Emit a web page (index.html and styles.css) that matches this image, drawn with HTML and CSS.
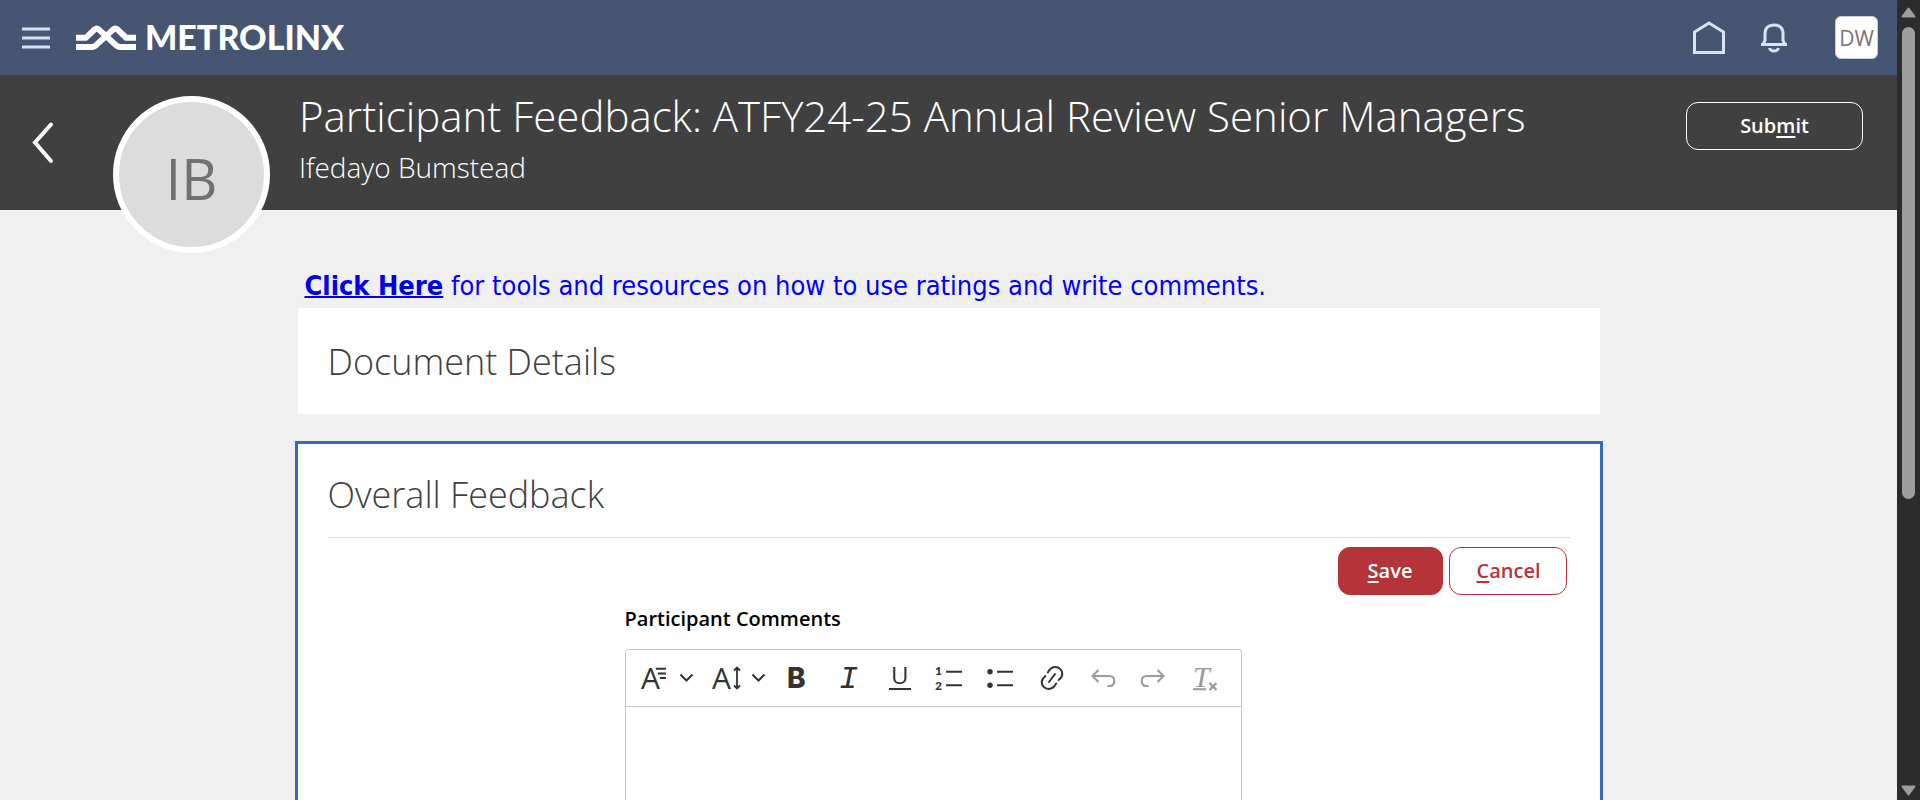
FILE: index.html
```html
<!DOCTYPE html>
<html lang="en">
<head>
<meta charset="utf-8">
<title>Participant Feedback</title>
<link rel="stylesheet" href="styles.css">
</head>
<body>
<div class="page">
  <div class="topbar">
    <button class="icon-button menu" type="button" aria-label="Menu">
      <svg width="28" height="22" viewBox="0 0 28 22"><path d="M0 2h28M0 11h28M0 20h28" stroke="#d5dfed" stroke-width="3"/></svg>
    </button>
    <a class="brand" href="#">
      <svg width="60" height="26" viewBox="0 0 180 78" fill="none" stroke="#fff" stroke-width="18" stroke-linejoin="round">
        <path d="M0 38H30L56 13Q62 8 68 13L118 59Q124 66 133 66H180"/>
        <path d="M180 38H150L124 13Q118 8 112 13L62 59Q56 66 47 66H0"/>
      </svg>
      <span class="brand-name">METROLINX</span>
    </a>
    <div class="topbar-tools">
      <button class="icon-button" type="button" aria-label="Home">
        <svg width="32" height="34" viewBox="0 0 32 34" fill="none" stroke="#dbe3f0" stroke-width="3"><path d="M1.5 31.500V11L16 2L30.500 11V31.500Z"/></svg>
      </button>
      <button class="icon-button" type="button" aria-label="Notifications">
        <svg width="26" height="30" viewBox="0 0 26 30" fill="none" stroke="#dbe3f0" stroke-width="3"><path d="M0 21.500H26M2 21.500L4 17.500V10.500C4 5 7.500 2 13 2S22 5 22 10.500V17.500L24 21.500"/><path d="M8.500 25C9.500 29 16.500 29 17.500 25"/></svg>
      </button>
      <button class="user-badge" type="button">DW</button>
    </div>
  </div>

  <header class="header">
    <button class="icon-button back" type="button" aria-label="Back">
      <svg width="22" height="42" viewBox="0 0 22 42" fill="none" stroke="#fff" stroke-width="4" stroke-linecap="round"><path d="M19 2.500L3 20.500L19 39"/></svg>
    </button>
    <div class="avatar">IB</div>
    <div class="heading">
      <h1>Participant Feedback: ATFY24-25 Annual Review Senior Managers</h1>
      <p>Ifedayo Bumstead</p>
    </div>
    <button class="button button-ghost" type="button">Sub<u>m</u>it</button>
  </header>

  <main class="content">
    <p class="hint"><a href="#">Click Here</a> for tools and resources on how to use ratings and write comments.</p>
    <section class="card">
      <h2>Document Details</h2>
    </section>
    <section class="card card-active">
      <h2>Overall Feedback</h2>
      <div class="card-body">
        <div class="actions">
          <button class="button button-primary" type="button"><span><u>S</u>ave</span></button>
          <button class="button button-outline" type="button"><span><u>C</u>ancel</span></button>
        </div>
        <div class="field">
          <label for="comments">Participant Comments</label>
          <div class="editor">
            <div class="toolbar">
              <button class="tool tool-drop" type="button" aria-label="Heading">
                <svg width="28" height="28" viewBox="0 0 28 28"><text class="glyph" x="2" y="25">A</text><path d="M17 4.700H27M19 9.400H27M21 14H27" stroke="#333" stroke-width="2"/></svg>
                <svg class="caret" width="15" height="10" viewBox="0 0 15 10"><path d="M1.500 1.500L7.500 7.500L13.500 1.500"/></svg>
              </button>
              <button class="tool tool-drop" type="button" aria-label="Font size">
                <svg width="28" height="28" viewBox="0 0 28 28"><text class="glyph" x="1" y="25">A</text><path d="M26 4V24M23 6.500L26 3.500L29 6.500M23 21.500L26 24.500L29 21.500" fill="none" stroke="#333" stroke-width="1.800"/></svg>
                <svg class="caret" width="15" height="10" viewBox="0 0 15 10"><path d="M1.500 1.500L7.500 7.500L13.500 1.500"/></svg>
              </button>
              <button class="tool" type="button" aria-label="Bold">
                <svg width="28" height="28" viewBox="0 0 28 28"><text class="glyph glyph-bold" x="3" y="24">B</text></svg>
              </button>
              <button class="tool" type="button" aria-label="Italic">
                <svg width="28" height="28" viewBox="0 0 28 28"><text class="glyph glyph-italic" x="4" y="24">I</text></svg>
              </button>
              <button class="tool" type="button" aria-label="Underline">
                <svg width="28" height="28" viewBox="0 0 28 28"><text class="glyph glyph-underline" x="5" y="20">U</text><path d="M3 25H25" stroke="#333" stroke-width="2"/></svg>
              </button>
              <button class="tool" type="button" aria-label="Numbered list">
                <svg width="28" height="28" viewBox="0 0 28 28"><text class="glyph glyph-number" x="-2" y="11">1</text><text class="glyph glyph-number" x="-2" y="26">2</text><path d="M9 7.700H25M9 21.300H25" stroke="#333" stroke-width="2"/></svg>
              </button>
              <button class="tool" type="button" aria-label="Bulleted list">
                <svg width="28" height="28" viewBox="0 0 28 28"><circle cx="2" cy="7.700" r="2.700" fill="#333"/><circle cx="2" cy="21.300" r="2.700" fill="#333"/><path d="M9 7.700H25M9 21.300H25" stroke="#333" stroke-width="2"/></svg>
              </button>
              <button class="tool" type="button" aria-label="Link">
                <svg width="28" height="28" viewBox="0 0 28 28" fill="none" stroke="#333" stroke-width="2" stroke-linecap="round"><path d="M8.800 8.400C11 4.500 13.500 3 16.300 3C20.500 3 23.300 6.200 23.300 10C23.300 12.500 21.500 14.500 19.600 16M17.200 19.600C15 23.500 12.500 25 9.700 25C5.500 25 2.700 21.800 2.700 18C2.700 15.500 4.500 13.500 6.400 12M10 18L16 10"/></svg>
              </button>
              <button class="tool" type="button" aria-label="Undo" disabled>
                <svg width="28" height="28" viewBox="0 0 28 28" fill="none" stroke="#9a9a9a" stroke-width="2"><path d="M8.500 6L2.500 12L8.500 18M2.500 12H19C22.500 12 24.300 14 24.300 17C24.300 20 22.500 22 19.500 22H17.500"/></svg>
              </button>
              <button class="tool" type="button" aria-label="Redo" disabled>
                <svg width="28" height="28" viewBox="0 0 28 28" fill="none" stroke="#9a9a9a" stroke-width="2"><path d="M16.500 6L22.500 12L16.500 18M22.500 12H6C2.500 12 .7 14 .7 17C.7 20 2.500 22 5.500 22H7.500"/></svg>
              </button>
              <button class="tool" type="button" aria-label="Remove format" disabled>
                <svg width="28" height="28" viewBox="0 0 28 28"><text class="glyph glyph-clear" x="1" y="23">T</text><path d="M1 25.200H14" stroke="#9a9a9a" stroke-width="2"/><path d="M17.500 19L24.500 26M24.500 19L17.500 26" stroke="#9a9a9a" stroke-width="2.400"/></svg>
              </button>
            </div>
            <textarea id="comments" rows="8"></textarea>
          </div>
        </div>
      </div>
    </section>
  </main>
</div>
<div class="scrollbar">
  <svg width="15" height="11" viewBox="0 0 15 11" fill="#9e9e9e" stroke="#9e9e9e" stroke-width="2" stroke-linejoin="round"><path d="M7.500 1.500L13.500 9.500H1.500Z"/></svg>
  <div class="track"><div class="thumb"></div></div>
  <svg width="15" height="11" viewBox="0 0 15 11" fill="#9e9e9e" stroke="#9e9e9e" stroke-width="2" stroke-linejoin="round"><path d="M7.500 9.500L13.500 1.500H1.500Z"/></svg>
</div>
</body>
</html>
```
FILE: styles.css
```css
* { box-sizing: border-box; }

body {
  margin: 0;
  height: 100vh;
  overflow: hidden;
  display: grid;
  grid-template-columns: minmax(0, 1fr) 23px;
  font-family: "Open Sans", "Noto Sans", sans-serif;
  font-size: 20px;
  background: #f0f0f0;
}

h1, h2, p { margin: 0; font-weight: 300; }
button { font: inherit; cursor: pointer; }
svg { display: block; flex: none; overflow: visible; }

.page { height: 100vh; overflow: hidden; }

.icon-button { display: flex; padding: 0; border: 0; background: none; }

.topbar {
  display: flex;
  align-items: center;
  height: 75px;
  padding: 0 19px 0 22px;
  background: #465672;
}
.brand {
  display: flex;
  align-items: center;
  gap: 9px;
  margin-left: 26px;
  color: #fff;
  text-decoration: none;
}
.brand-name { padding-bottom: 2px; font: 900 34px/40px Lato, sans-serif; }
.topbar-tools { display: flex; align-items: center; gap: 36px; margin-left: auto; }
.user-badge {
  width: 43px;
  height: 43px;
  margin-left: 12px;
  padding: 0;
  border: 1px solid #c5cedb;
  border-radius: 6px;
  background: #fff;
  color: #757575;
  font-size: 21px;
  line-height: 38px;
}

.header {
  display: flex;
  align-items: flex-start;
  height: 135px;
  padding: 0 34px 0 32px;
  background: #404040;
  color: #fff;
}
.back { margin-top: 47px; }
.avatar {
  flex: none;
  width: 157px;
  height: 157px;
  margin: 21px 0 0 59px;
  border: 6px solid #fff;
  border-radius: 50%;
  background: #dcdcdc;
  color: #717171;
  font-size: 56px;
  line-height: 152px;
  text-align: center;
}
.heading { flex: 1; margin: 12px 0 0 29px; }
.heading h1 { font-size: 42px; line-height: 58px; white-space: nowrap; }
.heading p { font-size: 28px; line-height: 44px; }

.button {
  height: 48px;
  padding: 0 27px 2px;
  border: 1px solid #b53439;
  border-radius: 12px;
  font-size: 20px;
  font-weight: 600;
  white-space: nowrap;
}
.button u { text-underline-offset: 3px; text-decoration-thickness: 2px; }
.button-ghost {
  width: 177px;
  margin-top: 27px;
  border-color: #fff;
  background: none;
  color: #fff;
}
.button-primary { width: 105px; background: #b53439; color: #fff; }
.button-outline { width: 118px; background: #fff; color: #b53439; }

.content { width: calc(100% - 589px); margin: 0 auto; padding-top: 56px; }
.hint {
  margin: 0 10px;
  padding-bottom: 3px;
  color: #00f;
  font-family: "DejaVu Sans Condensed", "DejaVu Sans", sans-serif;
  font-size: 27px;
  font-weight: 400;
  line-height: 39px;
  white-space: nowrap;
}
.hint a { color: #00e; font-weight: 700; text-decoration-thickness: 2px; }

.card { margin: 0 3px; padding: 0 30px; background: #fff; }
.card h2 { padding: 28px 0 26px; color: #404040; font-size: 36px; line-height: 52px; }
.card-active { margin: 27px 0 0; border: 3px solid #366ab3; }
.card-body { border-top: 1px solid #d3dde5; }
.card-active h2 { padding: 25px 0 16px; }

.actions { display: flex; justify-content: flex-end; gap: 6px; padding: 9px 3px 0 0; }
.field { width: 617px; margin: 6px auto 0 297px; }
.field label { display: block; font-weight: 600; line-height: 36px; }
.editor { margin-top: 12px; border: 1px solid #c8c8cc; border-radius: 3px; }
.toolbar {
  display: flex;
  align-items: center;
  gap: 3px;
  height: 57px;
  padding: 0 4px;
  border-bottom: 1px solid #c8c8cc;
}
.tool {
  display: flex;
  align-items: center;
  justify-content: center;
  width: 48px;
  height: 48px;
  padding: 0;
  border: 0;
  background: none;
}
.tool-drop { justify-content: flex-start; gap: 12px; width: 69px; padding-left: 9px; }
.caret { fill: none; stroke: #333; stroke-width: 2px; }
.glyph { font: 400 30px "Open Sans", sans-serif; fill: #333; }
.glyph-bold { font: 800 28px Inter, sans-serif; }
.glyph-italic { font: italic 400 32px "Liberation Mono", monospace; }
.glyph-underline { font-size: 24px; }
.glyph-number { font: 900 12px Lato, sans-serif; }
.glyph-clear { font: italic 400 30px "Liberation Serif", serif; fill: #9a9a9a; }
textarea {
  display: block;
  width: 100%;
  padding: 12px;
  border: 0;
  outline: 0;
  resize: none;
  background: none;
  font: inherit;
}

.scrollbar {
  display: flex;
  flex-direction: column;
  align-items: center;
  gap: 9px;
  height: 100vh;
  padding: 7px 0 4px;
  background: #2c2c2c;
}
.track { flex: 1; width: 13px; }
.thumb { height: 63%; border-radius: 7px; background: #9e9e9e; }
```
